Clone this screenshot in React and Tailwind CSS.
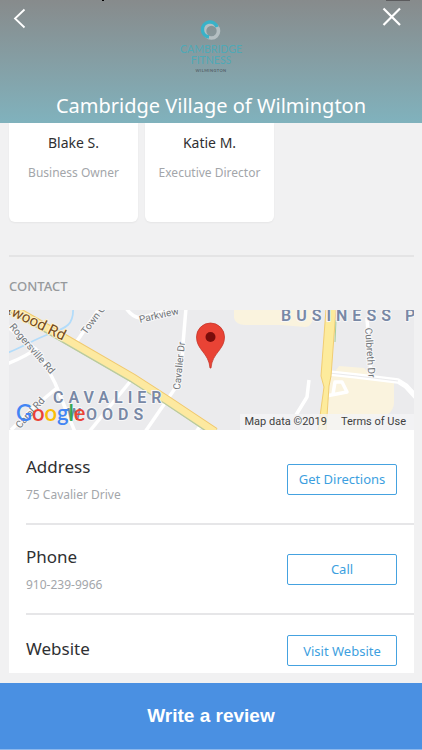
import { clsx } from 'clsx';

const TEAM = [
  { name: 'Blake S.', role: 'Business Owner' },
  { name: 'Katie M.', role: 'Executive Director' },
];

const CONTACTS = [
  { label: 'Address', value: '75 Cavalier Drive', action: 'Get Directions' },
  { label: 'Phone',   value: '910-239-9966',      action: 'Call'           },
  { label: 'Website', value: null,                action: 'Visit Website'  },
];

function Logo() {
  return (
    <svg className="w-16 h-14" viewBox="0 0 64 56" role="img" aria-label="Cambridge Fitness Wilmington">
      <circle cx="32.500" cy="13" r="7" fill="none" stroke="#b4bfc2" strokeWidth="3.6" />
      <path d="M30 19 A7.500 7.500 0 1 1 38 9" fill="none" stroke="#38b2c8" strokeWidth="3.4" />
      <g textAnchor="middle" className="font-['Lato']" fill="#4fa9b7">
        <text x="32" y="35" fontSize="10.500">CAMBRIDGE</text>
        <text x="32" y="46" fontSize="10.500">FITNESS</text>
        <text x="32" y="54" fontSize="4" fontWeight="700" fill="#56636a" className="tracking-widest">WILMINGTON</text>
      </g>
    </svg>
  );
}

function Header() {
  return (
    <header className="relative flex flex-col items-center h-[123px] shrink-0 bg-linear-to-b from-[#878b8c] to-[#80b2bd] overflow-hidden">
      <button aria-label="Back" className="absolute left-2 top-2 w-6 h-6 text-white">
        <svg className="w-6 h-6" viewBox="0 0 24 24" fill="none" stroke="currentColor" strokeWidth="1.8">
          <path d="M16.500 1.500 L7 10.500 L16.500 19.500" />
        </svg>
      </button>
      <button aria-label="Close" className="absolute right-[18px] top-1 w-6 h-6 text-white">
        <svg className="w-6 h-6" viewBox="0 0 24 24" fill="none" stroke="currentColor" strokeWidth="2.200">
          <path d="M3.500 4.500 L20 21 M20 4.500 L3.500 21" />
        </svg>
      </button>
      <span className="absolute left-[102px] top-0 w-0.5 h-px bg-black" />
      <span className="absolute right-3 top-0 w-6 h-px bg-[#5b5b5d]" />
      <div className="pt-[18px]"><Logo /></div>
      <h1 className="mt-4 text-xl leading-8 text-white">Cambridge Village of Wilmington</h1>
    </header>
  );
}

function MapDrawing() {
  return (
    <svg className="block w-full h-[120px] bg-[#ebebed]" viewBox="0 0 405 120" preserveAspectRatio="xMidYMid slice">
      {/* commercial areas */}
      <path d="M225 0 H304 Q305 17 296 17 L272 15 H236 Q227 15 225 8 Z" fill="#faf3de" />
      <path d="M330 56 L355 58 L362 65 L385 70 V93 Q384 105 372 106 L352 110 L350 120 H314 L320 70 Z" fill="#faf3de" />
      {/* creek */}
      <path d="M64 -2 C65 14 58 18 40 24 C24 30 14 37 -2 43" fill="none" stroke="#b3dcfa" strokeWidth="1.800" />
      {/* side streets */}
      <g fill="none" stroke="#fff" strokeWidth="3.500" strokeLinejoin="round">
        <path d="M92 -4 L68 31" />
        <path d="M117 -2 Q123 7 131 8 L160 0" />
        <path d="M177 -2 L174 34 Q173 66 167 77 L136 122" />
        <path d="M124 68 L80 122" />
        <path d="M-2 54 Q18 46 28 38 M-2 16 L30 42 L46 73 L55 95 L66 122" />
        <path d="M49 77 L24 98 L2 120" />
        <path d="M192 115 L187 122" />
        <path d="M300 70 L298 87 L287 105" />
        <path d="M358 8 L362 66" />
        <path d="M317 86 L338 82 L333 72 H326 L324 84" />
        <path d="M320 63 L348 66 L389 71 L397 76 L407 87" strokeWidth="5.500" />
      </g>
      <path d="M320 63 L348 66 L389 71" fill="none" stroke="#dfdfe3" strokeWidth="0.700" />
      {/* main roads */}
      <g fill="none">
        <path d="M-3 -5 L41 20 L124 68 L158 90 L206 122" stroke="#f2c86c" strokeWidth="9" />
        <path d="M-3 -4 L41 21 L124 69 L158 91 L206 123" stroke="#b8cba0" strokeWidth="8" />
        <path d="M-3 -5 L41 20 L124 68 L158 90 L206 122" stroke="#fde9a0" strokeWidth="7" />
      </g>
      <path d="M317 -1 H327 L322 66 L320 76 L317 121 H309 L315 77 L312 66 Z" fill="#fdeb9c" stroke="#f1cd72" strokeWidth="1" />
      <path d="M327 10 L326 32" stroke="#a9cf9a" strokeWidth="1" />
      {/* street and district names */}
      <g className="font-['Roboto']" stroke="#f7f7f8" strokeWidth="2" style={{ paintOrder: 'stroke' }} strokeLinejoin="round">
        <g fontSize="10" fill="#717579">
          <text transform="translate(0 17) rotate(49)">Rogersville Rd</text>
          <text transform="translate(77 25) rotate(-53)">Town Creek</text>
          <text transform="translate(131 13) rotate(-13)">Parkview</text>
          <text transform="translate(171 80) rotate(-84)">Cavalier Dr</text>
          <text transform="translate(356 18) rotate(86)">Culbreth Dr</text>
          <text transform="translate(11 119) rotate(-48)">Carol Rd</text>
        </g>
        <text transform="translate(-3 3) rotate(26)" fontSize="15" fill="#754c1c" stroke="#fff1c9">twood Rd</text>
        <g fontSize="16" fontWeight="600" fill="#7888a5" className="tracking-[5px]">
          <text x="44" y="93">CAVALIER</text>
          <text x="58" y="110">WOODS</text>
          <text x="272" y="11">BUSINESS PARK</text>
        </g>
      </g>
      {/* pin */}
      <path d="M202 58 H201 C200 43 187.500 40 187.500 27 A14 14 0 0 1 215.500 27 C215.500 40 203 43 202 58 Z" fill="#e94335" stroke="#c5362b" strokeWidth="0.800" />
      <circle cx="201.500" cy="27" r="5" fill="#7a0d0b" />
      {/* map provider */}
      <text x="7" y="111" fontSize="22" fontWeight="600" className="font-['Lato']">
        <tspan fill="#4285f4">G</tspan>
        <tspan fill="#ea4335">o</tspan>
        <tspan fill="#fbbc05">o</tspan>
        <tspan fill="#4285f4">g</tspan>
        <tspan fill="#34a853">l</tspan>
        <tspan fill="#ea4335">e</tspan>
      </text>
    </svg>
  );
}

function ContactRow({ label, value, action }) {
  return (
    <div className={clsx('ml-[17px] pr-[17px] flex items-center justify-between', value ? 'h-[90px] border-b-2 border-[#e6e6e8]' : 'pt-5 pb-[7px]')}>
      <div className={clsx(value && 'pt-1')}>
        <h3 className="mb-1 text-[17px] leading-6 text-[#2f3032]">{label}</h3>
        {value && <p className="text-xs leading-6 text-[#a3a6aa]">{value}</p>}
      </div>
      <button className="w-[110px] h-[31px] rounded-xs border border-[#45a2e0] text-[13px] leading-5 text-[#3d9fe0]">{action}</button>
    </div>
  );
}

export default function App() {
  return (
    <div className="min-h-screen flex flex-col bg-[#f1f1f2] font-['Noto_Sans',sans-serif]">
      <Header />
      <main className="flex-1 pl-[9px] pr-2 pb-[10px]">
        <section className="flex gap-[7px]">
          {TEAM.map(({ name, role }) => (
            <div key={name} className="w-[129px] h-[99px] pt-[10px] rounded-b-md bg-white text-center shadow-xs">
              <h3 className="text-sm leading-5 text-[#2f3032]">{name}</h3>
              <p className="mt-[10px] text-xs leading-5 text-[#a3a6aa]">{role}</p>
            </div>
          ))}
        </section>
        <hr className="mt-[33px] border-t-2 border-[#e4e4e5]" />
        <h2 className="mt-[19px] mb-[14px] text-[13px] leading-5 font-medium text-[#96999c]">CONTACT</h2>
        <section className="bg-white">
          <div className="relative">
            <MapDrawing />
            <div className="absolute right-0 bottom-0 flex gap-[14px] pl-[5px] pr-2 bg-[#f4f4f5]/80 font-['Roboto'] text-[11px] leading-4 text-[#3f3f40]">
              <span>Map data ©2019</span>
              <a href="#terms">Terms of Use</a>
            </div>
          </div>
          <div className="pt-[5px]">
            {CONTACTS.map((item) => <ContactRow key={item.label} {...item} />)}
          </div>
        </section>
      </main>
      <button className="w-full h-[67px] shrink-0 bg-[#4a90e2] border-b border-[#8db8ec] font-['Liberation_Sans',sans-serif] text-[19px] font-bold text-white">
        Write a review
      </button>
    </div>
  );
}
